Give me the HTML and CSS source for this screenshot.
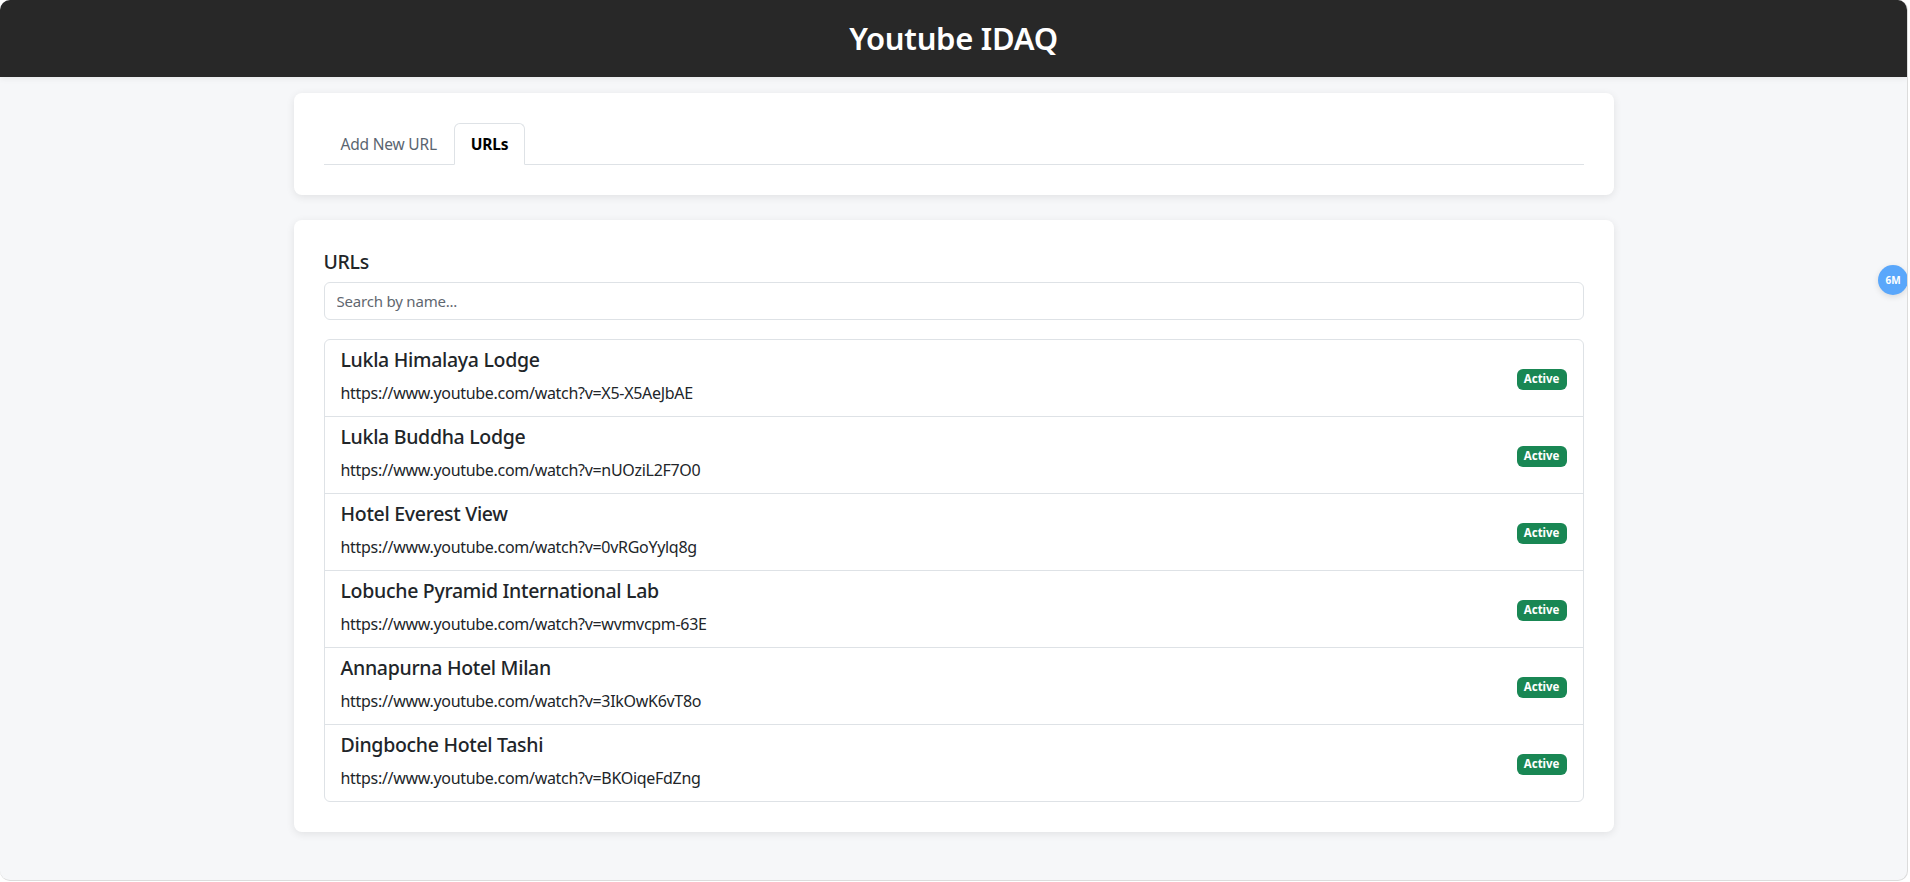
FILE: index.html
```html
<!DOCTYPE html>
<html lang="en">
<head>
<meta charset="utf-8">
<title>Youtube IDAQ</title>
<link rel="stylesheet" href="styles.css">
</head>
<body>
<div class="app">
  <header class="topbar">
    <h1 class="brand">Youtube IDAQ</h1>
  </header>
  <main class="container">
    <section class="card">
      <ul class="tabs">
        <li class="tab">Add New URL</li>
        <li class="tab tab-active">URLs</li>
      </ul>
    </section>
    <section class="card">
      <h5 class="section-title">URLs</h5>
      <input class="search" type="text" placeholder="Search by name...">
      <ul class="list">
        <li class="item">
          <div class="item-text">
            <h5 class="item-title">Lukla Himalaya Lodge</h5>
            <p class="item-url">https://www.youtube.com/watch?v=X5-X5AeJbAE</p>
          </div>
          <span class="badge">Active</span>
        </li>
        <li class="item">
          <div class="item-text">
            <h5 class="item-title">Lukla Buddha Lodge</h5>
            <p class="item-url">https://www.youtube.com/watch?v=nUOziL2F7O0</p>
          </div>
          <span class="badge">Active</span>
        </li>
        <li class="item">
          <div class="item-text">
            <h5 class="item-title">Hotel Everest View</h5>
            <p class="item-url">https://www.youtube.com/watch?v=0vRGoYylq8g</p>
          </div>
          <span class="badge">Active</span>
        </li>
        <li class="item">
          <div class="item-text">
            <h5 class="item-title">Lobuche Pyramid International Lab</h5>
            <p class="item-url">https://www.youtube.com/watch?v=wvmvcpm-63E</p>
          </div>
          <span class="badge">Active</span>
        </li>
        <li class="item">
          <div class="item-text">
            <h5 class="item-title">Annapurna Hotel Milan</h5>
            <p class="item-url">https://www.youtube.com/watch?v=3IkOwK6vT8o</p>
          </div>
          <span class="badge">Active</span>
        </li>
        <li class="item">
          <div class="item-text">
            <h5 class="item-title">Dingboche Hotel Tashi</h5>
            <p class="item-url">https://www.youtube.com/watch?v=BKOiqeFdZng</p>
          </div>
          <span class="badge">Active</span>
        </li>
      </ul>
    </section>
  </main>
  <div class="float-badge">6M</div>
</div>
</body>
</html>
```

FILE: styles.css
```css
* { box-sizing: border-box; }
html, body {
  margin: 0;
  padding: 0;
  background: #ffffff;
}
body {
  font-family: "Segoe UI", "Noto Sans", "Open Sans", sans-serif;
  color: #212529;
  font-size: 16px;
  line-height: 1.5;
}
.app {
  position: relative;
  width: 1908px;
  height: 881px;
  background: #f6f7f9;
  border-radius: 10px;
  border: 1px solid #dcdcdc;
  border-top: none;
  border-left: none;
  overflow: hidden;
}
.topbar {
  background: #282828;
  height: 77px;
  display: flex;
  align-items: center;
  justify-content: center;
  box-shadow: 0 2px 6px rgba(0,0,0,0.06);
}
.brand {
  margin: 0;
  color: #ffffff;
  font-size: 31px;
  font-weight: 600;
  line-height: 1.2;
  letter-spacing: -0.3px;
}
.container {
  width: 1320px;
  margin: 16px auto 0;
  display: flex;
  flex-direction: column;
  gap: 25px;
}
.card {
  background: #ffffff;
  border-radius: 8px;
  box-shadow: 0 2px 8px rgba(0,0,0,0.09);
  padding: 30px;
}
.tabs {
  list-style: none;
  margin: 0;
  padding: 0;
  display: flex;
  border-bottom: 1px solid #dee2e6;
}
.tab {
  padding: 8px 16px;
  border: 1px solid transparent;
  border-top-left-radius: 6px;
  border-top-right-radius: 6px;
  margin-bottom: -1px;
  color: #5a6570;
  font-size: 15.5px;
  line-height: 24px;
  letter-spacing: -0.2px;
}
.tab-active {
  border-color: #dee2e6 #dee2e6 #ffffff;
  background: #ffffff;
  color: #000000;
  font-weight: 700;
}
.section-title {
  margin: 0 0 8px;
  font-size: 19.5px;
  font-weight: 500;
  line-height: 24px;
  letter-spacing: -0.3px;
}
.search {
  display: block;
  width: 100%;
  height: 38px;
  padding: 6px 12px;
  border: 1px solid #dee2e6;
  border-radius: 6px;
  font-family: inherit;
  font-size: 15px;
  color: #212529;
  outline: none;
  margin-bottom: 19px;
  letter-spacing: -0.2px;
}
.search::placeholder { color: #5f6770; }
.list {
  list-style: none;
  margin: 0;
  padding: 0;
  border: 1px solid #dee2e6;
  border-radius: 6px;
}
.item {
  display: flex;
  align-items: center;
  justify-content: space-between;
  padding: 8px 16px 11px;
  border-bottom: 1px solid #dee2e6;
  height: 77px;
}
.item:last-child { border-bottom: none; height: 76px; }
.item-title {
  margin: 0 0 9px;
  font-size: 19.5px;
  font-weight: 500;
  line-height: 24px;
  letter-spacing: -0.3px;
}
.item-url {
  margin: 0;
  font-size: 16px;
  line-height: 24px;
  letter-spacing: -0.3px;
}
.badge {
  background: #198754;
  color: #ffffff;
  font-size: 11.5px;
  font-weight: 700;
  line-height: 1;
  padding: 4px 7px 5px;
  border-radius: 6px;
  margin-top: 6px;
}
.float-badge {
  position: absolute;
  right: -1px;
  top: 265px;
  width: 30px;
  height: 30px;
  border-radius: 50%;
  background: #5aa7fb;
  color: #ffffff;
  font-size: 10px;
  font-weight: 700;
  display: flex;
  align-items: center;
  justify-content: center;
  box-shadow: 0 2px 6px rgba(0,0,0,0.12);
}
```
